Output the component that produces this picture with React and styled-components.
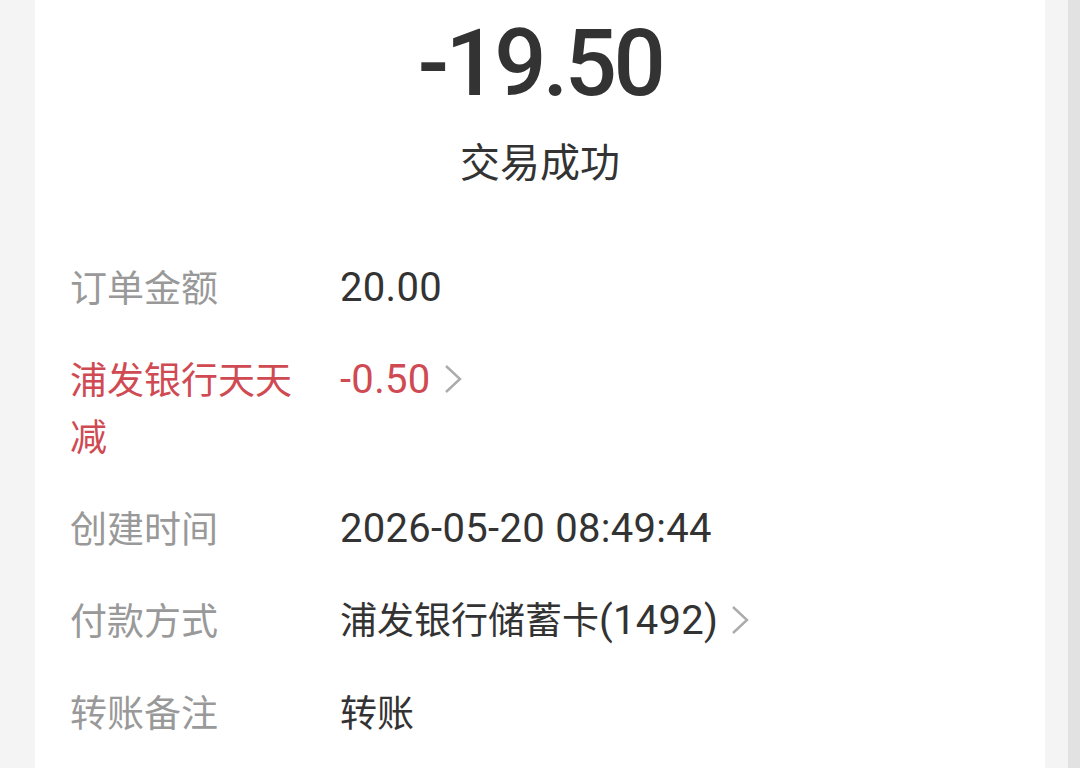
import React from "react";
import styled, { createGlobalStyle } from "styled-components";

const GlobalStyle = createGlobalStyle`
  html, body {
    margin: 0;
    padding: 0;
    background: #f4f4f4;
  }
  body {
    font-family: "Noto Sans CJK SC", "Noto Sans", sans-serif;
  }
`;

const Screen = styled.div`
  display: flex;
  height: 768px;
  overflow: hidden;
`;

const Main = styled.div`
  flex: 1;
  padding: 0 23px 0 35px;
`;

const ScrollTrack = styled.div`
  width: 12px;
  background: #e2e2e2;
`;

const Card = styled.div`
  background: #fff;
  height: 100%;
  padding: 0 35px;
  box-sizing: border-box;
`;

const Header = styled.div`
  display: flex;
  flex-direction: column;
  align-items: center;
  padding-top: 12px;
`;

const Amount = styled.div`
  font-family: Roboto, "Liberation Sans", sans-serif;
  font-weight: 500;
  font-size: 92px;
  line-height: 104px;
  color: #333;
  letter-spacing: -3.6px;
`;

const Status = styled.div`
  font-size: 40px;
  line-height: 56px;
  color: #333;
  margin-top: 16px;
`;

const List = styled.div`
  display: flex;
  flex-direction: column;
  gap: 35px;
  margin-top: 70px;
`;

const Row = styled.div`
  display: flex;
  align-items: flex-start;
  font-size: 37px;
  line-height: 57px;
`;

const Label = styled.div`
  width: 236px;
  margin-right: 34px;
  flex-shrink: 0;
  color: ${(p) => (p.$red ? "#cf4a52" : "#999")};
`;

const Value = styled.div`
  display: flex;
  align-items: center;
  height: 57px;
  color: ${(p) => (p.$red ? "#cf4a52" : "#333")};
`;

const Text = styled.span`
  white-space: nowrap;
`;

const Latin = styled.span`
  font-family: Roboto, "Liberation Sans", sans-serif;
  font-size: 40px;
  letter-spacing: 0.3px;
`;

const Arrow = styled.svg`
  margin-left: 12px;
  flex-shrink: 0;
`;

const Chevron = () => (
  <Arrow width="20" height="30" viewBox="0 0 20 30">
    <path d="M3 2 L17 15 L3 28" fill="none" stroke="#ababab" strokeWidth="2.4" />
  </Arrow>
);

// ascii runs (digits, brackets, dashes) get the number font
const renderValue = (v) =>
  v.split(/([\x20-\x7e]+)/).filter(Boolean).map((part, i) =>
    /^[\x20-\x7e]+$/.test(part) ? <Latin key={i}>{part}</Latin> : part
  );

const rows = [
  { label: "订单金额", value: "20.00" },
  { label: "浦发银行天天减", value: "-0.50", red: true, arrow: true },
  { label: "创建时间", value: "2026-05-20 08:49:44" },
  { label: "付款方式", value: "浦发银行储蓄卡(1492)", arrow: true },
  { label: "转账备注", value: "转账" },
];

export default function App() {
  return (
    <>
      <GlobalStyle />
      <Screen>
        <Main>
          <Card>
            <Header>
              <Amount>-19.50</Amount>
              <Status>交易成功</Status>
            </Header>
            <List>
              {rows.map((r) => (
                <Row key={r.label}>
                  <Label $red={r.red}>{r.label}</Label>
                  <Value $red={r.red}>
                    <Text>{renderValue(r.value)}</Text>
                    {r.arrow && <Chevron />}
                  </Value>
                </Row>
              ))}
            </List>
          </Card>
        </Main>
        <ScrollTrack />
      </Screen>
    </>
  );
}
